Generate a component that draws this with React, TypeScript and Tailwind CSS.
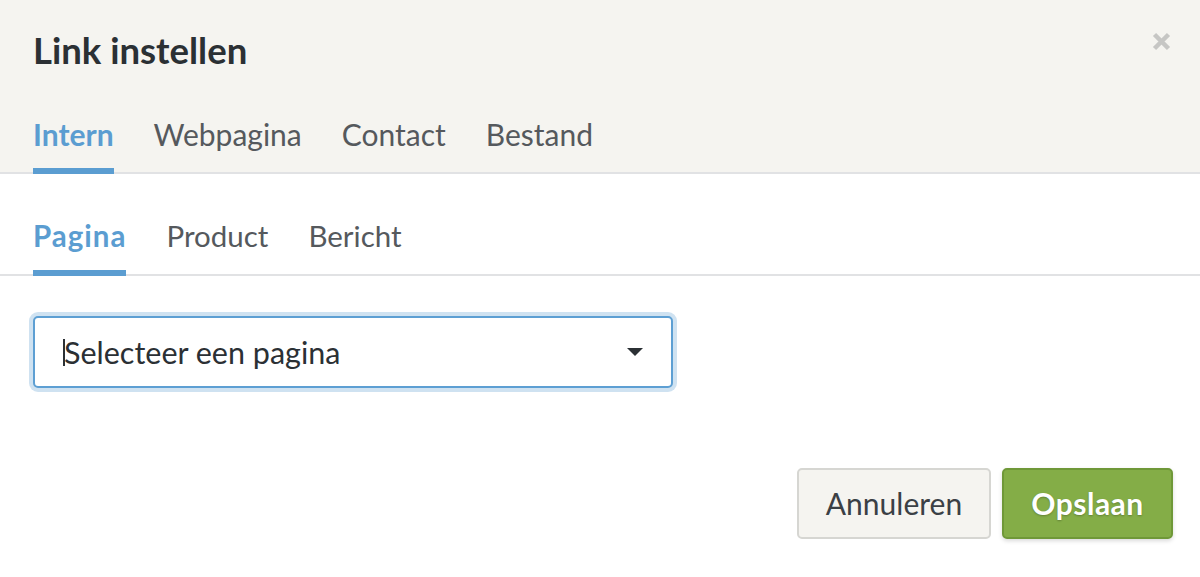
import { useState } from "react";

const mainTabs = ["Intern", "Webpagina", "Contact", "Bestand"];
const subTabs = ["Pagina", "Product", "Bericht"];

export default function App() {
  const [tab, setTab] = useState("Intern");
  const [subTab, setSubTab] = useState("Pagina");

  return (
    <div className="w-[1200px] h-[577px] bg-white font-['Lato','Liberation_Sans',sans-serif] overflow-hidden">
      <div className="relative bg-[#f5f4f0] border-b-2 border-[#e1e2e4] px-[33px]">
        <h1 className="h-[100px] flex items-center text-[36.5px] font-bold text-[#2b3034] leading-none">
          Link instellen
        </h1>
        <button className="absolute right-[29px] top-[32px] w-[19px] h-[19px] text-[#c6c6c4]">
          <svg viewBox="0 0 19 19" className="w-[19px] h-[19px]">
            <path d="M2.5 2.5 L16.5 16.5 M16.5 2.5 L2.5 16.5" stroke="currentColor" strokeWidth="4.5" />
          </svg>
        </button>
        <nav className="flex gap-[40px]">
          {mainTabs.map((t) => (
            <button
              key={t}
              onClick={() => setTab(t)}
              className={`h-[74px] -mb-[2px] flex items-center text-[30px] leading-none border-b-[6px] ${
                tab === t ? "border-[#5b9dd1] text-[#5b9dd1] font-bold" : "border-transparent text-[#55595d]"
              }`}
            >
              {t}
            </button>
          ))}
        </nav>
      </div>

      <div className="border-b-2 border-[#e1e2e4] px-[33px]">
        <nav className="flex gap-[40px]">
          {subTabs.map((t) => (
            <button
              key={t}
              onClick={() => setSubTab(t)}
              className={`h-[102px] -mb-[2px] pt-[28px] flex items-center text-[29.5px] leading-none border-b-[6px] ${
                subTab === t
                  ? "border-[#5b9dd1] text-[#5b9dd1] font-bold tracking-[1px]"
                  : "border-transparent text-[#55595d]"
              }`}
            >
              {t}
            </button>
          ))}
        </nav>
      </div>

      <div className="px-[33px] pt-[40px]">
        <div className="w-[640px] h-[72px] rounded-[5px] border-2 border-[#5d9fd3] ring-4 ring-[#cfe2f1] bg-white flex items-center pl-[28px] pr-[28px]">
          <span className="w-[2px] h-[27px] bg-[#2b3034] mr-[-1px]" />
          <span className="flex-1 text-[30.5px] text-[#2b3034] leading-none">Selecteer een pagina</span>
          <svg viewBox="0 0 16 8" className="w-[16px] h-[8px]">
            <path d="M0 0 L16 0 L8 8 Z" fill="#2b3034" />
          </svg>
        </div>
      </div>

      <div className="flex justify-end gap-[11px] pr-[27px] pt-[80px]">
        <button className="w-[194px] h-[71px] rounded-[5px] border-2 border-[#d6d6d2] bg-[#f5f4f0] text-[30px] text-[#3b4045]">
          Annuleren
        </button>
        <button className="w-[171px] h-[71px] rounded-[5px] border-2 border-[#6f9838] bg-[#84ad47] text-[30px] font-bold tracking-[0.5px] text-white shadow-[0_2px_4px_rgba(0,0,0,0.15)] [text-shadow:0_1px_2px_rgba(0,0,0,0.25)]">
          Opslaan
        </button>
      </div>
    </div>
  );
}
